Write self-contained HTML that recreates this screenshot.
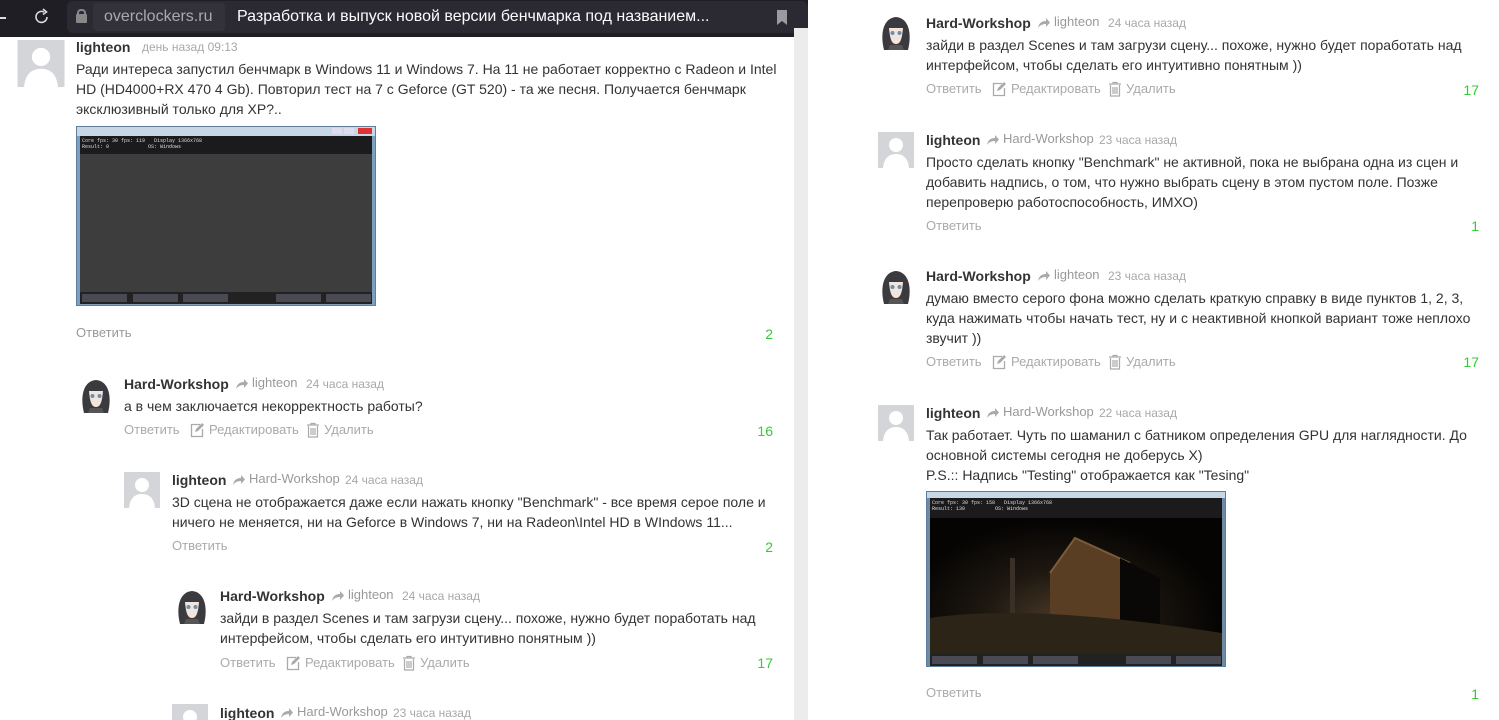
<!DOCTYPE html>
<html><head><meta charset="utf-8">
<style>
*{margin:0;padding:0;box-sizing:border-box}
html,body{width:1499px;height:720px;overflow:hidden}
body{background:#fff;font-family:"Liberation Sans",Arial,sans-serif;position:relative;color:#333}
.a{position:absolute;white-space:nowrap}
.t{font-size:14px;line-height:20px;color:#333}
.n{font-size:14px;font-weight:bold;color:#333;line-height:20px}
.m{font-size:12px;color:#a8a8a8;line-height:20px}
.r{font-size:13px;color:#999;line-height:20px}
.act{font-size:13px;color:#aaa;line-height:20px}
.c{font-size:14px;color:#3c3;line-height:20px;text-align:right}
.av{position:absolute;width:36px;height:36px;overflow:hidden}
</style></head><body>
<svg width="0" height="0" style="position:absolute">
<defs>
<symbol id="gav" viewBox="0 0 36 36"><rect width="36" height="36" fill="#d3d5d8"/><circle cx="18" cy="13" r="7" fill="#fff"/><path d="M5 36 C6 25 12 22 18 22 C24 22 30 25 31 36Z" fill="#fff"/></symbol>
<symbol id="hav" viewBox="0 0 36 36"><rect width="36" height="36" fill="#fff"/><path d="M6 36 C2 20 5 4 18 3 C31 4 34 20 30 36Z" fill="#3a3a3f"/><path d="M11 14 C12 26 14 30 18 30 C22 30 24 26 25 14Z" fill="#f3e4dc"/><circle cx="14.5" cy="19" r="2" fill="#6a8fb0"/><circle cx="21.5" cy="19" r="2" fill="#6a8fb0"/><path d="M10 14 C14 9 22 9 26 14 L26 10 C22 6 14 6 10 10Z" fill="#3a3a3f"/><path d="M12 31 L24 31 L26 36 L10 36Z" fill="#555"/></symbol>
<symbol id="sh" viewBox="0 0 14 12"><path d="M1 11 C2 5 6 4 9 4 L9 1 L13 5.5 L9 10 L9 7 C6 7 3 8 1 11Z" fill="#aaa"/></symbol>
<symbol id="ed" viewBox="0 0 16 16"><path d="M11 2.5 H2.5 V14.5 H13.5 V7" fill="none" stroke="#aaa" stroke-width="1.3"/><path d="M6 10 L7 7 L13 1 L15 3 L9 9Z" fill="#aaa"/></symbol>
<symbol id="dl" viewBox="0 0 14 16"><path d="M1 3 H13 M5 3 V1.5 H9 V3 M2.5 4 V15 H11.5 V4 M5 6 V13 M7 6 V13 M9 6 V13" fill="none" stroke="#aaa" stroke-width="1.2"/></symbol>
</defs></svg>

<!-- browser bar -->
<div class="a" style="left:0;top:0;width:808px;height:37px;background:#1f1e25"></div>
<div class="a" style="left:0;top:17px;width:6px;height:2px;background:#ddd"></div>
<svg class="a" style="left:33px;top:8px" width="18" height="18" viewBox="0 0 18 18"><path d="M14 9 A5.5 5.5 0 1 1 11 4" fill="none" stroke="#ddd" stroke-width="1.6"/><path d="M10 1 L13.5 4 L10 6.5" fill="none" stroke="#ddd" stroke-width="1.6"/></svg>
<div class="a" style="left:67px;top:1px;width:741px;height:32px;background:#2b2a33;border-radius:6px"></div>
<div class="a" style="left:77px;top:9px;width:9px;height:7px;border:2px solid #888;border-bottom:none;border-radius:4px 4px 0 0"></div>
<div class="a" style="left:76px;top:14px;width:11px;height:9px;background:#888;border-radius:1px"></div>
<div class="a" style="left:93px;top:3px;width:132px;height:28px;background:#33323a;border-radius:4px"></div>
<div class="a" style="left:104px;top:7px;font-size:16px;line-height:20px;color:#a9a9b0">overclockers.ru</div>
<div class="a" style="left:237px;top:7px;font-size:16px;line-height:20px;color:#fbfbfe">Разработка и выпуск новой версии бенчмарка под названием...</div>
<svg class="a" style="left:776px;top:10px" width="12" height="15" viewBox="0 0 12 15"><path d="M1 0 H11 V15 L6 11 L1 15Z" fill="#9a9aa0"/></svg>

<!-- left pane scrollbar -->
<div class="a" style="left:794px;top:28px;width:14px;height:692px;background:#ececec"></div>

<!-- L comment 1 -->
<div class="av" style="left:16px;top:40px;width:50px;height:47px"><svg width="50" height="47"><use href="#gav" width="50" height="47"/></svg></div>
<div class="a n" style="left:76px;top:37px">lighteon</div>
<div class="a m" style="left:142px;top:37px">день назад 09:13</div>
<div class="a t" style="left:76px;top:59px">Ради интереса запустил бенчмарк в Windows 11 и Windows 7. На 11 не работает корректно с Radeon и Intel</div>
<div class="a t" style="left:76px;top:79px">HD (HD4000+RX 470 4 Gb). Повторил тест на 7 с Geforce (GT 520) - та же песня. Получается бенчмарк</div>
<div class="a t" style="left:76px;top:99px">эксклюзивный только для XP?..</div>
<div class="a" style="left:76px;top:126px;width:300px;height:180px;background:#7da0be;border:1px solid #5d7d9c">
 <div style="position:absolute;left:0;top:0;width:298px;height:9px;background:#c7d7e6"></div>
 <div style="position:absolute;left:255px;top:1px;width:10px;height:6px;background:#dde"></div>
 <div style="position:absolute;left:267px;top:1px;width:10px;height:6px;background:#dde"></div>
 <div style="position:absolute;left:281px;top:1px;width:14px;height:6px;background:#d33"></div>
 <div style="position:absolute;left:3px;top:9px;width:292px;height:18px;background:#1b1b1e;color:#ddd;font:5px 'Liberation Mono',monospace;line-height:6px;padding:2px">Core fps: 30 fps: 119 &nbsp; Display 1366x768<br>Result: 0 &nbsp;&nbsp;&nbsp;&nbsp;&nbsp;&nbsp;&nbsp;&nbsp;&nbsp;&nbsp;&nbsp; OS: Windows</div>
 <div style="position:absolute;left:3px;top:27px;width:292px;height:138px;background:#3d3d3d"></div>
 <div style="position:absolute;left:3px;top:165px;width:292px;height:12px;background:#222"></div>
 <div style="position:absolute;left:5px;top:167px;width:45px;height:8px;background:#4a4a55"></div>
 <div style="position:absolute;left:56px;top:167px;width:45px;height:8px;background:#4a4a55"></div>
 <div style="position:absolute;left:106px;top:167px;width:45px;height:8px;background:#4a4a55"></div>
 <div style="position:absolute;left:199px;top:167px;width:45px;height:8px;background:#4a4a55"></div>
 <div style="position:absolute;left:249px;top:167px;width:45px;height:8px;background:#4a4a55"></div>
</div>
<div class="a r" style="left:76px;top:323px">Ответить</div>
<div class="a c" style="left:713px;top:324px;width:60px">2</div>

<!-- L comment 2 -->
<div class="av" style="left:78px;top:377px"><svg width="36" height="36"><use href="#hav"/></svg></div>
<div class="a n" style="left:124px;top:374px">Hard-Workshop</div>
<svg class="a" style="left:235px;top:378px" width="14" height="12"><use href="#sh"/></svg>
<div class="a r" style="left:252px;top:373px">lighteon</div>
<div class="a m" style="left:306px;top:374px">24 часа назад</div>
<div class="a t" style="left:124px;top:396px">а в чем заключается некорректность работы?</div>
<div class="a act" style="left:124px;top:420px">Ответить</div>
<svg class="a" style="left:189px;top:422px" width="16" height="16"><use href="#ed"/></svg>
<div class="a act" style="left:209px;top:420px">Редактировать</div>
<svg class="a" style="left:306px;top:422px" width="14" height="16"><use href="#dl"/></svg>
<div class="a act" style="left:324px;top:420px">Удалить</div>
<div class="a c" style="left:713px;top:421px;width:60px">16</div>

<!-- L comment 3 -->
<div class="av" style="left:124px;top:472px"><svg width="36" height="36"><use href="#gav"/></svg></div>
<div class="a n" style="left:172px;top:470px">lighteon</div>
<svg class="a" style="left:232px;top:474px" width="14" height="12"><use href="#sh"/></svg>
<div class="a r" style="left:249px;top:469px">Hard-Workshop</div>
<div class="a m" style="left:345px;top:470px">24 часа назад</div>
<div class="a t" style="left:172px;top:492px">3D сцена не отображается даже если нажать кнопку "Benchmark" - все время серое поле и</div>
<div class="a t" style="left:172px;top:512px">ничего не меняется, ни на Geforce в Windows 7, ни на Radeon\Intel HD в WIndows 11...</div>
<div class="a act" style="left:172px;top:536px">Ответить</div>
<div class="a c" style="left:713px;top:537px;width:60px">2</div>

<!-- L comment 4 -->
<div class="av" style="left:174px;top:588px"><svg width="36" height="36"><use href="#hav"/></svg></div>
<div class="a n" style="left:220px;top:586px">Hard-Workshop</div>
<svg class="a" style="left:331px;top:590px" width="14" height="12"><use href="#sh"/></svg>
<div class="a r" style="left:348px;top:585px">lighteon</div>
<div class="a m" style="left:402px;top:586px">24 часа назад</div>
<div class="a t" style="left:220px;top:608px">зайди в раздел Scenes и там загрузи сцену... похоже, нужно будет поработать над</div>
<div class="a t" style="left:220px;top:628px">интерфейсом, чтобы сделать его интуитивно понятным ))</div>
<div class="a act" style="left:220px;top:653px">Ответить</div>
<svg class="a" style="left:285px;top:655px" width="16" height="16"><use href="#ed"/></svg>
<div class="a act" style="left:305px;top:653px">Редактировать</div>
<svg class="a" style="left:402px;top:655px" width="14" height="16"><use href="#dl"/></svg>
<div class="a act" style="left:420px;top:653px">Удалить</div>
<div class="a c" style="left:713px;top:653px;width:60px">17</div>

<!-- L comment 5 -->
<div class="av" style="left:172px;top:704px;height:16px"><svg width="36" height="36"><use href="#gav"/></svg></div>
<div class="a n" style="left:220px;top:703px">lighteon</div>
<svg class="a" style="left:280px;top:707px" width="14" height="12"><use href="#sh"/></svg>
<div class="a r" style="left:297px;top:702px">Hard-Workshop</div>
<div class="a m" style="left:393px;top:703px">23 часа назад</div>

<!-- R comment 1 -->
<div class="av" style="left:878px;top:14px"><svg width="36" height="36"><use href="#hav"/></svg></div>
<div class="a n" style="left:926px;top:13px">Hard-Workshop</div>
<svg class="a" style="left:1037px;top:17px" width="14" height="12"><use href="#sh"/></svg>
<div class="a r" style="left:1054px;top:12px">lighteon</div>
<div class="a m" style="left:1108px;top:13px">24 часа назад</div>
<div class="a t" style="left:926px;top:35px">зайди в раздел Scenes и там загрузи сцену... похоже, нужно будет поработать над</div>
<div class="a t" style="left:926px;top:55px">интерфейсом, чтобы сделать его интуитивно понятным ))</div>
<div class="a act" style="left:926px;top:79px">Ответить</div>
<svg class="a" style="left:991px;top:81px" width="16" height="16"><use href="#ed"/></svg>
<div class="a act" style="left:1011px;top:79px">Редактировать</div>
<svg class="a" style="left:1108px;top:81px" width="14" height="16"><use href="#dl"/></svg>
<div class="a act" style="left:1126px;top:79px">Удалить</div>
<div class="a c" style="left:1419px;top:80px;width:60px">17</div>

<!-- R comment 2 -->
<div class="av" style="left:878px;top:132px"><svg width="36" height="36"><use href="#gav"/></svg></div>
<div class="a n" style="left:926px;top:130px">lighteon</div>
<svg class="a" style="left:986px;top:134px" width="14" height="12"><use href="#sh"/></svg>
<div class="a r" style="left:1003px;top:129px">Hard-Workshop</div>
<div class="a m" style="left:1099px;top:130px">23 часа назад</div>
<div class="a t" style="left:926px;top:152px">Просто сделать кнопку "Benchmark" не активной, пока не выбрана одна из сцен и</div>
<div class="a t" style="left:926px;top:172px">добавить надпись, о том, что нужно выбрать сцену в этом пустом поле. Позже</div>
<div class="a t" style="left:926px;top:192px">перепроверю работоспособность, ИМХО)</div>
<div class="a act" style="left:926px;top:216px">Ответить</div>
<div class="a c" style="left:1419px;top:216px;width:60px">1</div>

<!-- R comment 3 -->
<div class="av" style="left:878px;top:268px"><svg width="36" height="36"><use href="#hav"/></svg></div>
<div class="a n" style="left:926px;top:266px">Hard-Workshop</div>
<svg class="a" style="left:1037px;top:270px" width="14" height="12"><use href="#sh"/></svg>
<div class="a r" style="left:1054px;top:265px">lighteon</div>
<div class="a m" style="left:1108px;top:266px">23 часа назад</div>
<div class="a t" style="left:926px;top:288px">думаю вместо серого фона можно сделать краткую справку в виде пунктов 1, 2, 3,</div>
<div class="a t" style="left:926px;top:308px">куда нажимать чтобы начать тест, ну и с неактивной кнопкой вариант тоже неплохо</div>
<div class="a t" style="left:926px;top:328px">звучит ))</div>
<div class="a act" style="left:926px;top:352px">Ответить</div>
<svg class="a" style="left:991px;top:354px" width="16" height="16"><use href="#ed"/></svg>
<div class="a act" style="left:1011px;top:352px">Редактировать</div>
<svg class="a" style="left:1108px;top:354px" width="14" height="16"><use href="#dl"/></svg>
<div class="a act" style="left:1126px;top:352px">Удалить</div>
<div class="a c" style="left:1419px;top:352px;width:60px">17</div>

<!-- R comment 4 -->
<div class="av" style="left:878px;top:405px"><svg width="36" height="36"><use href="#gav"/></svg></div>
<div class="a n" style="left:926px;top:403px">lighteon</div>
<svg class="a" style="left:986px;top:407px" width="14" height="12"><use href="#sh"/></svg>
<div class="a r" style="left:1003px;top:402px">Hard-Workshop</div>
<div class="a m" style="left:1099px;top:403px">22 часа назад</div>
<div class="a t" style="left:926px;top:425px">Так работает. Чуть по шаманил с батником определения GPU для наглядности. До</div>
<div class="a t" style="left:926px;top:445px">основной системы сегодня не доберусь Х)</div>
<div class="a t" style="left:926px;top:465px">P.S.:: Надпись "Testing" отображается как "Tesing"</div>
<div class="a" style="left:926px;top:491px;width:300px;height:176px;background:#6f8aa3;border:1px solid #5d7d9c">
 <div style="position:absolute;left:0;top:0;width:298px;height:6px;background:#c7d7e6"></div>
 <div style="position:absolute;left:3px;top:6px;width:292px;height:20px;background:#1b1b1e;color:#ddd;font:5px 'Liberation Mono',monospace;line-height:6px;padding:2px">Core fps: 30 fps: 158 &nbsp; Display 1366x768<br>Result: 130 &nbsp;&nbsp;&nbsp;&nbsp;&nbsp;&nbsp;&nbsp;&nbsp; OS: Windows</div>
 <div style="position:absolute;left:3px;top:26px;width:292px;height:136px;background:radial-gradient(ellipse at 45% 75%,#4a3a28 0%,#1d1710 35%,#050403 70%)"></div>
 <svg style="position:absolute;left:3px;top:26px" width="292" height="136"><path d="M120 55 L145 20 L190 40 L190 120 L120 95Z" fill="#5a3e24"/><path d="M120 55 L145 20 L200 45" fill="none" stroke="#7b5a36" stroke-width="2"/><path d="M190 40 L230 60 L230 110 L190 120Z" fill="#0a0806"/><rect x="80" y="40" width="5" height="55" fill="#3a3028"/><path d="M0 100 Q100 85 292 115 L292 136 L0 136Z" fill="#2d2418"/></svg>
 <div style="position:absolute;left:3px;top:162px;width:292px;height:12px;background:#222"></div>
 <div style="position:absolute;left:5px;top:164px;width:45px;height:8px;background:#4a4a55"></div>
 <div style="position:absolute;left:56px;top:164px;width:45px;height:8px;background:#4a4a55"></div>
 <div style="position:absolute;left:106px;top:164px;width:45px;height:8px;background:#4a4a55"></div>
 <div style="position:absolute;left:199px;top:164px;width:45px;height:8px;background:#4a4a55"></div>
 <div style="position:absolute;left:249px;top:164px;width:45px;height:8px;background:#4a4a55"></div>
</div>
<div class="a act" style="left:926px;top:683px">Ответить</div>
<div class="a c" style="left:1419px;top:684px;width:60px">1</div>
</body></html>
